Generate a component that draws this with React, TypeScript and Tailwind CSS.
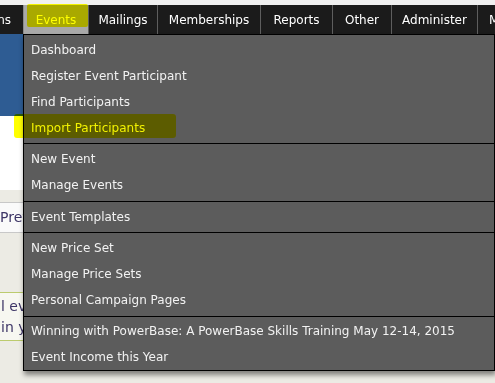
import React from "react";

const font = { fontFamily: '"DejaVu Sans", Verdana, sans-serif' };

type Section = { items: string[]; cls: string };
const sections: Section[] = [
  {
    items: ["Dashboard", "Register Event Participant", "Find Participants", "Import Participants"],
    cls: "pt-[2px] pb-[2px]",
  },
  { items: ["New Event", "Manage Events"], cls: "pt-[2px] pb-[3px] border-t border-black" },
  { items: ["Event Templates"], cls: "pt-[2px] pb-[2px] border-t border-black" },
  {
    items: ["New Price Set", "Manage Price Sets", "Personal Campaign Pages"],
    cls: "pt-[2px] pb-[3px] border-t border-black",
  },
  {
    items: ["Winning with PowerBase: A PowerBase Skills Training May 12-14, 2015", "Event Income this Year"],
    cls: "pt-[1px] border-t border-black",
  },
];

export default function App() {
  return (
    <div
      className="relative w-[495px] h-[383px] overflow-hidden bg-[#ecebe4] text-[12px]"
      style={font}
    >
      {/* top strip */}
      <div className="h-[5px] bg-[#f0f0f0]" />
      {/* nav bar */}
      <div className="flex h-[29px] bg-[#1b1b1b] text-white">
        <div className="w-[23px] overflow-hidden flex items-center justify-end pr-[12px] whitespace-nowrap">
          <span>ns</span>
        </div>
        <div className="w-[65px] flex items-center justify-center bg-[#a9a9a9] border-l border-[#8a8a8a]">
          Events
        </div>
        <div className="w-[69px] flex items-center justify-center border-l border-[#5e5e5e]">Mailings</div>
        <div className="w-[103px] flex items-center justify-center border-l border-[#5e5e5e]">Memberships</div>
        <div className="w-[72px] flex items-center justify-center border-l border-[#5e5e5e]">Reports</div>
        <div className="w-[59px] flex items-center justify-center border-l border-[#5e5e5e]">Other</div>
        <div className="w-[86px] flex items-center justify-center border-l border-[#5e5e5e]">Administer</div>
        <div className="flex-1 flex items-center pl-[11px] border-l border-[#5e5e5e] overflow-hidden whitespace-nowrap">
          M
        </div>
      </div>

      {/* page behind the menu (only the left sliver is visible) */}
      <div className="w-[23px] overflow-hidden flex flex-col text-[14px] text-[#3d3566]">
        <div className="h-[82px] bg-[#2e5c93]" />
        <div className="h-[74px] bg-white" />
        <div className="h-[12px]" />
        <div className="h-[31px] bg-[#fafafa] border-y border-[#c8c8c8] flex items-center whitespace-nowrap overflow-hidden">
          Prev
        </div>
        <div className="h-[59px]" />
        <div className="h-[49px] bg-[#f7f7f1] border-y border-[#bccb6e] flex flex-col justify-center leading-[21px] whitespace-nowrap overflow-hidden pl-[1px]">
          <div>l ev</div>
          <div>in y</div>
        </div>
      </div>

      {/* dropdown menu */}
      <div className="absolute left-[23px] top-[34px] w-[472px] bg-[#5c5c5c] border border-black shadow-[1px_4px_5px_rgba(0,0,0,0.45)] text-[#f2f2f2] text-[12px]">
        {sections.map((s, si) => (
          <div key={si} className={s.cls}>
            {s.items.map((it) => (
              <div key={it} className="h-[26px] flex items-center pl-[7px] whitespace-nowrap">
                {it}
              </div>
            ))}
          </div>
        ))}
      </div>

      {/* highlighter marks */}
      <div className="absolute left-[27px] top-[4px] w-[61px] h-[23px] bg-[#ffff00] mix-blend-multiply rounded-[2px] z-10" />
      <div className="absolute left-[14px] top-[114px] w-[162px] h-[24px] bg-[#ffff00] mix-blend-multiply rounded-[3px] z-10" />
    </div>
  );
}
